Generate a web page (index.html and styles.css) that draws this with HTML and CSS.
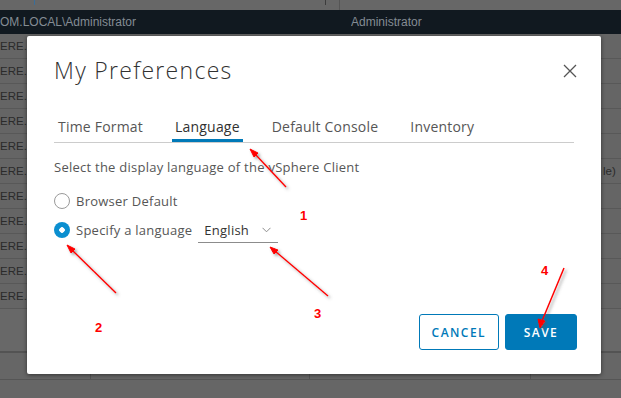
FILE: index.html
```html
<!DOCTYPE html>
<html>
<head>
  <meta charset="utf-8">
  <title>My Preferences</title>
  <link rel="stylesheet" href="styles.css">
</head>
<body>
  <div class="screen">
    <div class="topbar">
      <span class="tick tick-blue"></span>
      <span class="tick tick-dark"></span>
      <span class="col-line"></span>
    </div>
    <div class="userrow">
      <span class="cell c-user">OM.LOCAL\Administrator</span>
      <span class="cell c-role">Administrator</span>
    </div>
    <div class="rows">
      <div class="row"><span class="cell c-user">ERE.L</span></div>
      <div class="row"><span class="cell c-user">ERE.L</span></div>
      <div class="row"><span class="cell c-user">ERE.L</span></div>
      <div class="row"><span class="cell c-user">ERE.L</span></div>
      <div class="row"><span class="cell c-user">ERE.L</span></div>
      <div class="row"><span class="cell c-user">ERE.L</span><span class="cell c-end">le)</span></div>
      <div class="row"><span class="cell c-user">ERE.L</span></div>
      <div class="row"><span class="cell c-user">ERE.L</span></div>
      <div class="row"><span class="cell c-user">ERE.L</span></div>
      <div class="row"><span class="cell c-user">ERE.L</span></div>
      <div class="row"><span class="cell c-user">ERE.L</span></div>
    </div>
    <div class="tablefoot"></div>
    <div class="grid2">
      <span class="gcol"></span><span class="gcol"></span><span class="gcol"></span><span class="gcol"></span>
    </div>
  </div>

  <div class="modal">
    <div class="modal-header">
      <h3 class="modal-title">My Preferences</h3>
      <button class="close" aria-label="Close">
        <svg width="14" height="14" viewBox="0 0 14 14"><path d="M1 1 L13 13 M13 1 L1 13" stroke="#555" stroke-width="1.3" fill="none"/></svg>
      </button>
    </div>

    <ul class="tabs">
      <li class="tab">Time Format</li>
      <li class="tab active">Language</li>
      <li class="tab">Default Console</li>
      <li class="tab">Inventory</li>
    </ul>

    <p class="desc">Select the display language of the vSphere Client</p>

    <div class="radio-row">
      <span class="radio"></span>
      <span class="radio-label">Browser Default</span>
    </div>
    <div class="radio-row">
      <span class="radio checked"></span>
      <span class="radio-label">Specify a language</span>
      <div class="select">
        <span>English</span>
        <svg width="9" height="6" viewBox="0 0 9 6"><path d="M0.5 0.8 L4.5 4.8 L8.5 0.8" stroke="#8c8c8c" stroke-width="1" fill="none"/></svg>
      </div>
    </div>

    <div class="modal-footer">
      <button class="btn btn-outline">Cancel</button>
      <button class="btn btn-primary">Save</button>
    </div>
  </div>

  <svg class="marks" width="621" height="398" viewBox="0 0 621 398">
    <defs>
      <filter id="shade" x="-20%" y="-20%" width="140%" height="140%">
        <feDropShadow dx="2" dy="2" stdDeviation="1.6" flood-color="#555" flood-opacity="0.55"/>
      </filter>
    </defs>
    <g filter="url(#shade)" stroke="#f00" stroke-width="1.5" fill="#f00">
      <line x1="286" y1="187" x2="255" y2="154"/>
      <polygon points="250,149 258,153 254,157" stroke-width="1"/>
      <line x1="116" y1="293" x2="72" y2="250"/>
      <polygon points="67,245 75,249 71,253" stroke-width="1"/>
      <line x1="328" y1="296" x2="275" y2="251"/>
      <polygon points="270,247 278,250 274,254" stroke-width="1"/>
      <line x1="564" y1="268" x2="542" y2="321"/>
      <polygon points="540,328 538,319 545,321" stroke-width="1"/>
    </g>
    <g class="nums">
      <text x="300" y="220">1</text>
      <text x="95" y="332">2</text>
      <text x="314" y="318">3</text>
      <text x="541" y="275">4</text>
    </g>
  </svg>
</body>
</html>
```

FILE: styles.css
```css
body {
  margin: 0;
  width: 621px;
  height: 398px;
  overflow: hidden;
  position: relative;
  background-color: #666;
  font-family: "Open Sans", sans-serif;
}

/* dimmed page behind the dialog */
.screen {
  width: 621px;
  height: 398px;
  font-family: "Liberation Sans", Arial, sans-serif;
}
.topbar {
  height: 10px;
  background-color: #676767;
  position: relative;
}
.tick {
  position: absolute;
  top: 0;
  width: 1px;
  height: 5px;
}
.tick-blue {
  left: 34px;
  background-color: #3a6e9a;
}
.tick-dark {
  left: 325px;
  background-color: #3c3c3c;
}
.col-line {
  position: absolute;
  left: 339px;
  top: 0;
  width: 1px;
  height: 10px;
  background-color: #555;
}
.userrow {
  height: 24px;
  background-color: #111920;
  display: flex;
  align-items: center;
  color: #848c94;
  font-size: 12px;
}
.cell {
  white-space: nowrap;
  overflow: hidden;
}
.c-user {
  width: 351px;
}
.c-role {
  flex: 1;
}
.row {
  height: 24px;
  border-bottom: 1px solid #585858;
  background-color: #656565;
  display: flex;
  align-items: center;
  color: #2a2a2a;
  font-size: 11.5px;
}
.row .c-user {
  width: 27px;
}
.c-end {
  margin-left: auto;
  width: 18px;
  color: #2a2a2a;
}
.tablefoot {
  height: 42px;
  border-bottom: 2px solid #535353;
  background-color: #686868;
}
.grid2 {
  height: 26px;
  border-bottom: 1px solid #555;
  display: grid;
  grid-template-columns: 91px 219px 221px 1fr;
}
.gcol {
  border-right: 1px solid #555;
}
.gcol:last-child {
  border-right: none;
}

/* dialog */
.modal {
  position: absolute;
  left: 27px;
  top: 36px;
  width: 574px;
  height: 338px;
  box-sizing: border-box;
  padding: 19px 24px 24px 27px;
  background-color: #fff;
  border-radius: 2px;
  box-shadow: 0 1px 4px rgba(0, 0, 0, 0.5);
  display: flex;
  flex-direction: column;
}
.modal-header {
  display: flex;
  justify-content: space-between;
  align-items: center;
}
.modal-title {
  margin: 0;
  font-size: 23px;
  font-weight: 300;
  line-height: 30px;
  letter-spacing: 1.3px;
  color: #313131;
}
.close {
  border: none;
  background: none;
  padding: 0;
  width: 14px;
  height: 14px;
  margin-top: 2px;
  display: flex;
}
.tabs {
  list-style: none;
  margin: 32px 3px 0 0;
  padding: 0;
  display: flex;
  gap: 26px;
  border-bottom: 1px solid #ccc;
}
.tab {
  font-size: 14px;
  line-height: 20px;
  letter-spacing: 0.2px;
  color: #565656;
  padding: 0 3px 2px;
  border-bottom: 3px solid transparent;
}
.tab:first-child {
  margin-left: 1px;
}
.tab.active {
  color: #313131;
  border-bottom-color: #0079b8;
}
.desc {
  margin: 15px 0 0;
  font-size: 13px;
  line-height: 18px;
  letter-spacing: 0.25px;
  color: #565656;
}
.radio-row {
  display: flex;
  align-items: flex-start;
  margin-top: 16px;
  font-size: 13px;
  line-height: 18px;
  letter-spacing: 0.25px;
  color: #565656;
}
.radio-row + .radio-row {
  margin-top: 11px;
}
.radio {
  width: 16px;
  height: 16px;
  box-sizing: border-box;
  margin: 1px 6px 0 0;
  border: 1px solid #9a9a9a;
  border-radius: 50%;
  flex-shrink: 0;
}
.radio.checked {
  border: none;
  background: radial-gradient(circle, #fff 0 2.5px, #0b8fd0 3px);
}
.select {
  margin-left: 6px;
  width: 80px;
  box-sizing: border-box;
  padding: 0 7px 3px 6px;
  border-bottom: 1px solid #8c8c8c;
  display: flex;
  justify-content: space-between;
  align-items: center;
  color: #333;
}
.modal-footer {
  margin-top: auto;
  display: flex;
  justify-content: flex-end;
  gap: 6px;
}
.btn {
  height: 36px;
  min-width: 72px;
  box-sizing: border-box;
  padding: 0 12px;
  border: 1px solid #0079b8;
  border-radius: 3px;
  font-family: "Open Sans", sans-serif;
  font-size: 12px;
  font-weight: 600;
  letter-spacing: 0.12em;
  text-transform: uppercase;
}
.btn-outline {
  background-color: #fff;
  color: #0079b8;
}
.btn-primary {
  background-color: #0079b8;
  color: #fff;
}

/* red annotation layer */
.marks {
  position: absolute;
  left: 0;
  top: 0;
  pointer-events: none;
}
.nums text {
  font-family: "Liberation Sans", Arial, sans-serif;
  font-size: 13px;
  font-weight: bold;
  fill: #f00;
}
```
